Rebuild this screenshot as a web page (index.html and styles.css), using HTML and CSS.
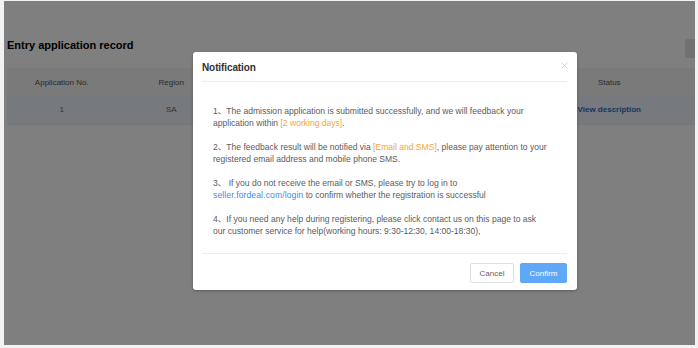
FILE: index.html
```html
<!DOCTYPE html>
<html>
<head>
<meta charset="utf-8">
<link rel="stylesheet" href="styles.css">
</head>
<body>
<div class="page">
  <div class="toolbar">
    <h2 class="title">Entry application record</h2>
    <button class="side-btn">Apply</button>
  </div>
  <table class="records">
    <thead>
      <tr>
        <th>Application No.</th>
        <th>Region</th>
        <th>Store name</th>
        <th>Category</th>
        <th>Submit time</th>
        <th>Status</th>
        <th>Operation</th>
      </tr>
    </thead>
    <tbody>
      <tr>
        <td>1</td>
        <td>SA</td>
        <td></td>
        <td></td>
        <td></td>
        <td><a class="link">View description</a></td>
        <td></td>
      </tr>
    </tbody>
  </table>
</div>
<div class="mask">
  <div class="dialog">
    <div class="dialog-header">
      <span class="dialog-title">Notification</span>
      <svg class="close" width="7" height="7" viewBox="0 0 7 7"><path d="M0.5 0.5L6.5 6.5M6.5 0.5L0.5 6.5" stroke="#c8cbd2" stroke-width="0.8" fill="none"/></svg>
    </div>
    <div class="dialog-body">
      <p>1、The admission application is submitted successfully, and we will feedback your application within <span class="warn">[2 working days]</span>.</p>
      <p>2、The feedback result will be notified via <span class="warn">[Email and SMS]</span>, please pay attention to your registered email address and mobile phone SMS.</p>
      <p>3、 If you do not receive the email or SMS, please try to log in to <span class="url">seller.fordeal.com/login</span> to confirm whether the registration is successful</p>
      <p>4、If you need any help during registering, please click contact us on this page to ask our customer service for help(working hours: 9:30-12:30, 14:00-18:30),</p>
    </div>
    <div class="dialog-footer">
      <button class="btn btn-cancel">Cancel</button>
      <button class="btn btn-confirm">Confirm</button>
    </div>
  </div>
</div>
</body>
</html>
```

FILE: styles.css
```css
* { box-sizing: border-box; }
html, body { margin: 0; padding: 0; }
body {
  width: 698px;
  height: 348px;
  overflow: hidden;
  background: #f2f2f2;
  font-family: "Liberation Sans", Arial, "Noto Sans CJK SC", sans-serif;
  position: relative;
}
.page {
  margin: 1px 3px 3px 4px;
  height: 344px;
  background: #fff;
  overflow: hidden;
  padding: 0 0 0 3px;
}
.toolbar {
  display: flex;
  align-items: center;
  justify-content: space-between;
  padding-top: 37px;
  height: 57px;
}
.title {
  margin: 0;
  font-size: 11px;
  font-weight: bold;
  color: #000;
  line-height: 18px;
  margin-top: -6px;
}
.side-btn {
  width: 20px;
  height: 19px;
  margin-right: -10px;
  border: none;
  background: #e2e2e2;
  color: #e2e2e2;
  font-size: 8px;
  border-radius: 2px;
}
.records {
  margin-top: 10px;
  border-collapse: collapse;
  table-layout: fixed;
  width: 766px;
  font-size: 8px;
}
.records th, .records td {
  width: 109.5px;
  height: 28px;
  text-align: center;
  padding: 0;
  white-space: nowrap;
}
.records th { background: #f4f4f5; color: #555; font-weight: normal; }
.records td { background: #ecf2fa; color: #666; border-bottom: 1px solid #ebeef5; }
.link { color: #2f6cc0; font-weight: bold; }

.mask {
  position: absolute;
  left: 4px; top: 1px; right: 3px; bottom: 3px;
  background: rgba(0,0,0,0.5);
  padding: 51px 0 0 189px;
}
.dialog {
  width: 384px;
  height: 238px;
  background: #fff;
  border-radius: 3px;
  box-shadow: 0 1px 3px rgba(0,0,0,0.3);
  display: flex;
  flex-direction: column;
  padding: 0 10px 0 9px;
}
.dialog-header {
  display: flex;
  justify-content: space-between;
  align-items: center;
  height: 30px;
  border-bottom: 1px solid #ebeef5;
  padding-top: 2px;
}
.dialog-title {
  font-size: 10px;
  font-weight: bold;
  color: #303133;
  letter-spacing: -0.1px;
}
.close {
  margin-right: -1px;
  margin-top: -5px;
}
.dialog-body {
  padding: 23px 18px 16px 11px;
  font-size: 8.55px;
  line-height: 12px;
  color: #5a5c60;
  border-bottom: 1px solid #ebeef5;
}
.dialog-body p { margin: 0 0 12px; }
.dialog-body p:last-child { margin-bottom: 0; }
.warn { color: #eea83d; }
.url { color: #3a8ee6; letter-spacing: 0.12px; }
.dialog-footer {
  display: flex;
  justify-content: flex-end;
  gap: 6px;
  padding-top: 9px;
}
.btn {
  height: 20px;
  border-radius: 2px;
  font-family: inherit;
  font-size: 8px;
  padding: 0;
}
.btn-cancel {
  width: 44px;
  background: #fff;
  border: 1px solid #dcdfe6;
  color: #606266;
}
.btn-confirm {
  width: 47px;
  background: #5fa7f7;
  border: 1px solid #5fa7f7;
  color: #fff;
}
```
